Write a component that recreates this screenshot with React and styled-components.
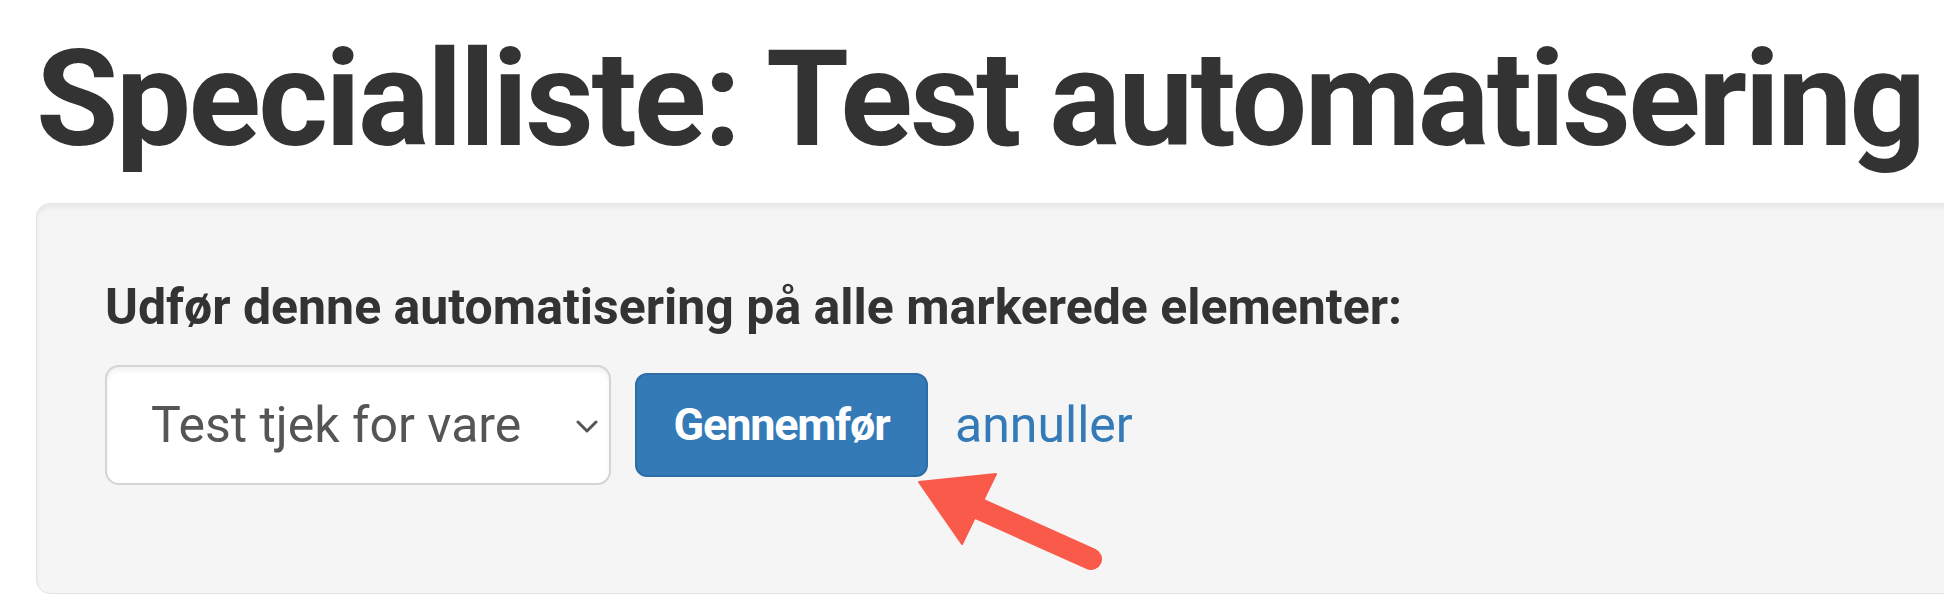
import styled, { createGlobalStyle } from 'styled-components';

const GlobalStyle = createGlobalStyle`
  body {
    margin: 0;
    background: #fff;
    font-family: Roboto, "Liberation Sans", Arial, sans-serif;
    color: #333;
    overflow: hidden;
  }
`;

const Page = styled.main`
  padding: 26px 0 0 36px;
`;

const Title = styled.h1`
  margin: 0;
  font-size: 134px;
  line-height: 1.1;
  font-weight: 700;
  letter-spacing: -2.7px;
  color: #333;
  white-space: nowrap;
`;

const Well = styled.section`
  margin-top: 30px;
  margin-right: -40px;
  padding: 68px 68px 108px;
  background: #f5f5f5;
  border: 1px solid #e3e3e3;
  border-radius: 14px;
  box-shadow: inset 0 4px 4px rgba(0, 0, 0, 0.05);
`;

const Label = styled.label`
  display: block;
  margin-bottom: 21px;
  font-size: 50px;
  line-height: 1.43;
  font-weight: 700;
  color: #333;
`;

const ActionRow = styled.div`
  display: flex;
  align-items: center;
`;

const SelectWrap = styled.div`
  position: relative;
  width: 506px;
  height: 120px;
`;

const Select = styled.select`
  appearance: none;
  -webkit-appearance: none;
  width: 100%;
  height: 100%;
  padding: 0 60px 0 44px;
  font-family: inherit;
  font-size: 50px;
  color: #555;
  background: #fff;
  border: 2px solid #d4d4d4;
  border-radius: 14px;
  box-shadow: inset 0 4px 4px rgba(0, 0, 0, 0.05);
  outline: none;
`;

const Chevron = styled.svg`
  position: absolute;
  right: 13px;
  top: 55px;
  width: 22px;
  height: 13px;
  pointer-events: none;
`;

const ButtonWrap = styled.div`
  position: relative;
  margin-left: 24px;
`;

const Button = styled.button`
  width: 293px;
  height: 104px;
  padding: 0 36px;
  font-family: inherit;
  font-size: 45px;
  font-weight: 700;
  letter-spacing: -1.2px;
  color: #fff;
  background: #337ab7;
  border: 2px solid #2e6da4;
  border-radius: 12px;
`;

const CancelLink = styled.a`
  margin-left: 27px;
  font-size: 50px;
  color: #337ab7;
  text-decoration: none;
`;

const Arrow = styled.svg`
  position: absolute;
  left: calc(100% - 15px);
  top: calc(100% - 11px);
  width: 190px;
  height: 105px;
  overflow: visible;
`;

export default function App() {
  return (
    <>
      <GlobalStyle />
      <Page>
        <Title>Specialliste: Test automatisering</Title>
        <Well>
          <Label htmlFor="automation">Udfør denne automatisering på alle markerede elementer:</Label>
          <ActionRow>
            <SelectWrap>
              <Select id="automation" defaultValue="test">
                <option value="test">Test tjek for vare</option>
              </Select>
              <Chevron viewBox="0 0 22 13">
                <path d="M2 2 L11 11 L20 2" fill="none" stroke="#555" strokeWidth="3" strokeLinecap="round" strokeLinejoin="round" />
              </Chevron>
            </SelectWrap>
            <ButtonWrap>
              <Button type="button">Gennemfør</Button>
              <Arrow viewBox="0 0 190 105">
                <line x1="62" y1="41" x2="178" y2="93" stroke="#fa5a4a" strokeWidth="22" strokeLinecap="round" />
                <polygon points="6,16 83,8 49,78" fill="#fa5a4a" stroke="#fa5a4a" strokeWidth="2" strokeLinejoin="round" />
              </Arrow>
            </ButtonWrap>
            <CancelLink href="#">annuller</CancelLink>
          </ActionRow>
        </Well>
      </Page>
    </>
  );
}
